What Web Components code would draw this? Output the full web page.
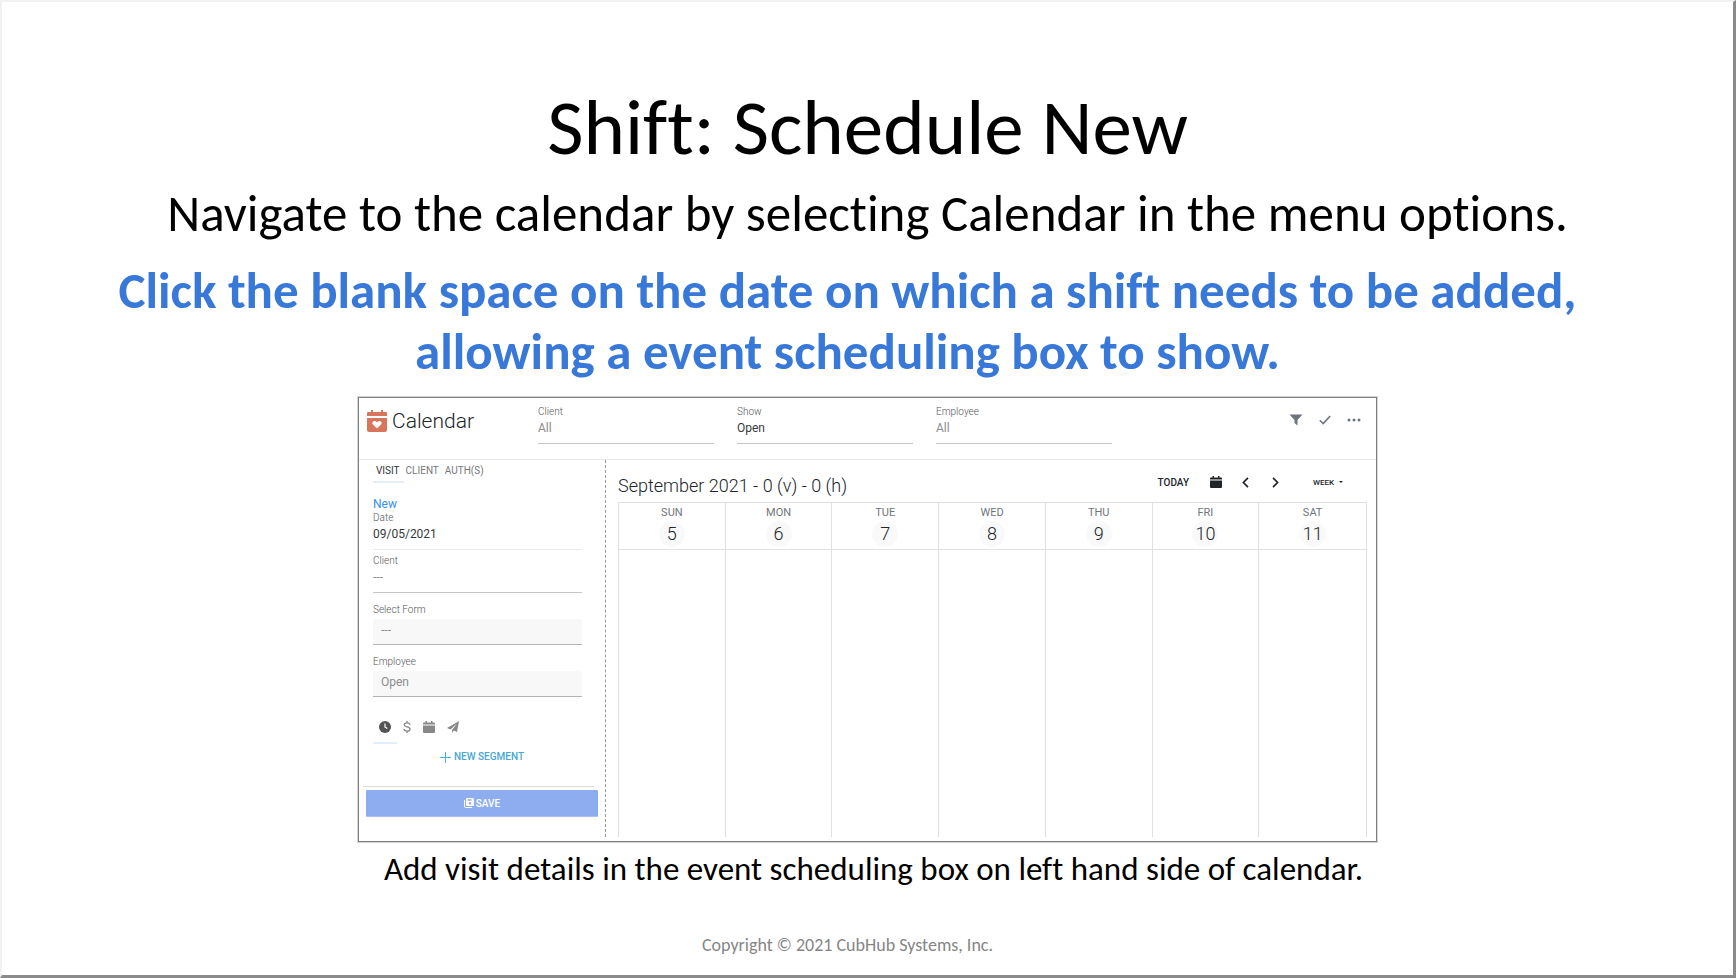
<!DOCTYPE html>
<html lang="en">
<head>
<meta charset="utf-8">
<title>Shift: Schedule New</title>
<style>
    body{
        margin:0;
        background:#fff;
    }
</style>
</head>
<body>
<slide-page>
    <span slot="title">Shift: Schedule New</span>
    <span slot="lead">Navigate to the calendar by selecting Calendar in the menu options.</span>
    <span slot="step">Click the blank space on the date on which a shift needs to be added, allowing a event scheduling box to show.</span>
    <calendar-app></calendar-app>
    <span slot="caption">Add visit details in the event scheduling box on left hand side of calendar.</span>
    <span slot="footer">Copyright © 2021 CubHub Systems, Inc.</span>
</slide-page>

<script>
const icons={
    logo:`<svg width="20" height="22" viewBox="0 0 20 22"><path fill="#d9755a" d="M1 2h3V0h2v2h8V0h2v2h3q1 0 1 1v3H0V3q0-1 1-1zM0 8h20v12q0 2-2 2H2q-2 0-2-2z"/><path fill="#fff" d="M10 18.500l-4-4c-2-2.200 1.300-5.300 4-2.300 2.700-3 6 .1 4 2.300z"/></svg>`,
    filter:`<svg width="14" height="12" viewBox="0 0 14 12"><path fill="#6c757d" d="M.5.5h13L8.500 6v5.500L5.500 9V6z"/></svg>`,
    check:`<svg width="12" height="10" viewBox="0 0 12 10"><path fill="none" stroke="#6c757d" stroke-width="1.600" d="M.8 5.200l3.400 3.300L11.200 1"/></svg>`,
    dots:`<svg width="14" height="4" viewBox="0 0 14 4"><g fill="#6c757d"><circle cx="2" cy="2" r="1.500"/><circle cx="7" cy="2" r="1.500"/><circle cx="12" cy="2" r="1.500"/></g></svg>`,
    clock:`<svg width="12" height="12" viewBox="0 0 12 12"><circle cx="6" cy="6" r="6" fill="#545454"/><path fill="none" stroke="#fff" stroke-width="1.200" d="M6 2.500V6l2.300 1.500"/></svg>`,
    dollar:`<svg width="8" height="12" viewBox="0 0 8 12"><path fill="none" stroke="#888" stroke-width="1.300" d="M7 3.800C6.800 1.400 1.200 1.300 1.200 3.800c0 2.600 5.900 1.600 5.900 4.400 0 2.700-6 2.500-6.200-.2M4 0v2M4 10v2"/></svg>`,
    calendar:`<svg width="12" height="12" viewBox="0 0 12 12"><path fill="currentColor" d="M1 1.500h1.500V0H4v1.500h4V0h1.500v1.500H11q1 0 1 1v1H0v-1q0-1 1-1zM0 4.500h12V11q0 1-1 1H1q-1 0-1-1z"/></svg>`,
    plane:`<svg width="12" height="12" viewBox="0 0 12 12"><path fill="#888" d="M12 0l-2 11-3.200-1.400L5 12V9l5-6.500L3.500 8.400 0 7z"/></svg>`,
    plus:`<svg width="11" height="11" viewBox="0 0 11 11"><path fill="none" stroke="#45b0dc" d="M5.500 0v11M0 5.500h11"/></svg>`,
    save:`<svg width="10" height="10" viewBox="0 0 10 10"><path fill="none" stroke="#fff" d="M.5 2v6.500q0 1 1 1H8"/><path fill="#fff" fill-rule="evenodd" d="M3 0h6l1 1v6q0 1-1 1H3Q2 8 2 7V1q0-1 1-1zM3.500 1.300v1.500h4V1.300zM6 4a1.300 1.300 0 1 0 .01 0z"/></svg>`,
    prev:`<svg width="7" height="11" viewBox="0 0 7 11"><path fill="none" stroke="#212529" stroke-width="1.700" d="M6 .8L1.400 5.500 6 10.200"/></svg>`,
    next:`<svg width="7" height="11" viewBox="0 0 7 11"><path fill="none" stroke="#212529" stroke-width="1.700" d="M1 .8l4.600 4.700L1 10.200"/></svg>`,
    caret:`<svg width="4" height="2" viewBox="0 0 4 2"><path fill="#212529" d="M0 0h4L2 2z"/></svg>`
}

const base=`
    *{
        box-sizing:border-box;
    }
    svg{
        display:block;
        flex:none;
    }
    button{
        display:flex;
        align-items:center;
        margin:0;
        padding:0;
        border:0;
        background:none;
        color:inherit;
        font:inherit;
        cursor:pointer;
    }
    input, select{
        appearance:none;
        margin:0;
        border:0;
        border-radius:0;
        background:none;
        font:inherit;
        outline:0;
    }
`

class SlidePage extends HTMLElement{
    constructor(){
        super()
        this.attachShadow({mode:'open'})
    }
    connectedCallback(){
        this.shadowRoot.innerHTML=`
        <style>
            ${base}
            :host{
                display:flex;
                flex-direction:column;
                align-items:center;
                box-sizing:border-box;
                min-height:100vh;
                padding-top:83px;
                border:2px solid #f1f1f1;
                border-right:3px solid #8a8a8a;
                border-bottom:3px solid #8a8a8a;
                font-family:Carlito, Lato, sans-serif;
                font-variant-ligatures:none;
                color:#000;
                text-align:center;
            }
            h1, p{
                margin:0;
                font-weight:400;
            }
            h1{
                font-size:79px;
                line-height:84px;
            }
            p{
                font-size:51px;
                line-height:61px;
            }
            .lead{
                margin-top:14px;
            }
            .step{
                max-width:1520px;
                margin-top:16px;
                padding-right:40px;
                font-weight:700;
                color:#3878d8;
            }
            ::slotted(calendar-app){
                width:59%;
                max-width:1019px;
                margin-top:15px;
            }
            .caption{
                margin-top:9px;
                padding-left:12px;
                font-size:33px;
                line-height:36px;
            }
            footer{
                margin-top:48px;
                padding-right:40px;
                font-size:18px;
                line-height:20px;
                color:#858585;
            }
        </style>
        <h1><slot name="title"></slot></h1>
        <p class="lead"><slot name="lead"></slot></p>
        <p class="step"><slot name="step"></slot></p>
        <slot></slot>
        <p class="caption"><slot name="caption"></slot></p>
        <footer><slot name="footer"></slot></footer>
        `
    }
}

class CalendarApp extends HTMLElement{
    constructor(){
        super()
        this.attachShadow({mode:'open'})
    }
    connectedCallback(){
        this.shadowRoot.innerHTML=`
        <style>
            ${base}
            :host{
                display:block;
                box-sizing:border-box;
                border:1px solid #7f7f7f;
                outline:1px solid #d4d4d4;
                font-family:Roboto, sans-serif;
                text-align:left;
                color:#212529;
            }
            .main{
                display:flex;
                padding-bottom:4px;
            }
            visit-panel{
                width:247px;
                flex:none;
            }
            week-view{
                flex:1;
            }
        </style>
        <app-header></app-header>
        <div class="main">
            <visit-panel></visit-panel>
            <week-view></week-view>
        </div>
        `
    }
}

class AppHeader extends HTMLElement{
    constructor(){
        super()
        this.attachShadow({mode:'open'})
    }
    connectedCallback(){
        this.shadowRoot.innerHTML=`
        <style>
            ${base}
            :host{
                display:flex;
                align-items:flex-start;
                height:62px;
                padding:0 15px 0 8px;
                border-bottom:1px solid #e6e8e9;
            }
            h2{
                display:flex;
                gap:5px;
                align-items:center;
                width:171px;
                margin:0;
                padding-top:11px;
                font-size:21px;
                line-height:24px;
                font-weight:300;
            }
            .filters{
                display:flex;
                flex:1;
                gap:23px;
                padding-top:8px;
            }
            form-field{
                width:176px;
            }
            .actions{
                display:flex;
                align-items:center;
                gap:16px;
                height:44px;
            }
        </style>
        <h2>${icons.logo}Calendar</h2>
        <div class="filters">
            <form-field kind="select" label="Client" value="All"></form-field>
            <form-field kind="select" label="Show" value="Open" class="dark"></form-field>
            <form-field kind="select" label="Employee" value="All"></form-field>
        </div>
        <div class="actions">
            <button aria-label="Filter">${icons.filter}</button>
            <button aria-label="Confirm">${icons.check}</button>
            <button aria-label="More">${icons.dots}</button>
        </div>
        `
    }
}

// label over a text box or a drop-down, class "filled" gives the grey box
class FormField extends HTMLElement{
    constructor(){
        super()
        this.attachShadow({mode:'open'})
    }
    connectedCallback(){
        const label=this.getAttribute('label')
        const value=this.getAttribute('value')
        const control=this.getAttribute('kind')==='select'
            ? `<select id="control"><option>${value}</option></select>`
            : `<input id="control" type="text" value="${value}">`
        this.shadowRoot.innerHTML=`
        <style>
            ${base}
            :host{
                display:block;
                color:#8c8c8c;
            }
            label{
                display:block;
                font-size:10px;
                line-height:12px;
                font-weight:300;
                color:#555;
            }
            input, select{
                display:block;
                width:100%;
                height:26px;
                padding:0 0 6px;
                border-bottom:1px solid #c4c6c8;
                font-size:12px;
                line-height:18px;
                color:inherit;
            }
            :host(.dark){
                color:#343a40;
            }
            :host(.light) input{
                border-color:#e9eaeb;
            }
            :host(.filled) label{
                margin-bottom:3px;
            }
            :host(.filled) select{
                padding:0 8px 4px;
                border-color:#b4b4b4;
                border-radius:2px 2px 0 0;
                background:#f8f8f8;
            }
        </style>
        <label for="control">${label}</label>
        ${control}
        `
    }
}

class VisitPanel extends HTMLElement{
    constructor(){
        super()
        this.attachShadow({mode:'open'})
    }
    connectedCallback(){
        this.shadowRoot.innerHTML=`
        <style>
            ${base}
            :host{
                display:flex;
                flex-direction:column;
                border-right:1px dashed #999;
            }
            .form{
                display:flex;
                flex-direction:column;
                padding:3px 23px 0 14px;
            }
            nav{
                display:flex;
                gap:6px;
                font-size:10px;
                color:#777;
            }
            nav button{
                height:20px;
                padding-bottom:4px;
                border-bottom:2px solid transparent;
            }
            nav .active{
                padding-left:3px;
                padding-right:4px;
                border-color:#e3eefa;
                color:#333;
            }
            nav .active + button{
                margin-left:-4px;
            }
            h3{
                margin:14px 0 0;
                font-size:12px;
                line-height:15px;
                font-weight:400;
                color:#3490ea;
            }
            .client{
                margin-top:5px;
            }
            .form-type{
                margin-top:11px;
            }
            .employee{
                margin-top:11px;
            }
            .tools{
                gap:12px;
                margin-top:22px;
                color:#888;
            }
            .tools button{
                height:25px;
                padding-bottom:8px;
            }
            .tools .active{
                padding-left:6px;
                padding-right:6px;
            }
            .tools .active + button{
                margin-left:-6px;
            }
            .segment{
                align-self:center;
                gap:3px;
                margin-top:7px;
                padding-left:9px;
                font-size:10px;
                line-height:12px;
                font-weight:500;
                color:#45a8d4;
            }
            hr{
                margin:23px 11px 3px 4px;
                border:0;
                border-top:1px solid #ddd;
            }
            .save{
                justify-content:center;
                gap:2px;
                height:27px;
                margin:0 7px 20px 7px;
                border-bottom:1px solid #a8bff0;
                border-radius:1px;
                background:#8dadf0;
                font-size:10px;
                font-weight:500;
                color:#fff;
            }
        </style>
        <div class="form">
            <nav>
                <button class="active">VISIT</button>
                <button>CLIENT</button>
                <button>AUTH(S)</button>
            </nav>
            <h3>New</h3>
            <form-field kind="text" label="Date" value="09/05/2021" class="dark light"></form-field>
            <form-field kind="text" label="Client" value="---" class="client"></form-field>
            <form-field kind="select" label="Select Form" value="---" class="filled form-type"></form-field>
            <form-field kind="select" label="Employee" value="Open" class="filled employee"></form-field>
            <nav class="tools">
                <button class="active" aria-label="Time">${icons.clock}</button>
                <button aria-label="Billing">${icons.dollar}</button>
                <button aria-label="Dates">${icons.calendar}</button>
                <button aria-label="Send">${icons.plane}</button>
            </nav>
            <button class="segment">${icons.plus}NEW SEGMENT</button>
        </div>
        <hr>
        <button class="save">${icons.save}SAVE</button>
        `
    }
}

class WeekView extends HTMLElement{
    constructor(){
        super()
        this.attachShadow({mode:'open'})
    }
    connectedCallback(){
        const days=['SUN','MON','TUE','WED','THU','FRI','SAT']
        const heads=days.map((day,i)=>`<th scope="col">${day}<span>${i+5}</span></th>`).join('')
        this.shadowRoot.innerHTML=`
        <style>
            ${base}
            :host{
                display:flex;
                flex-direction:column;
                padding:0 9px 0 12px;
            }
            .bar{
                display:flex;
                align-items:center;
                height:42px;
            }
            h3{
                flex:1;
                margin:0;
                padding-top:9px;
                font-size:18px;
                line-height:24px;
                font-weight:300;
            }
            .controls{
                display:flex;
                align-items:center;
                padding:2px 24px 0 0;
                font-size:10px;
                font-weight:500;
            }
            .today{
                margin-right:21px;
            }
            .prev{
                margin:0 23px 0 20px;
            }
            .next{
                margin-right:34px;
            }
            label{
                display:flex;
                align-items:center;
                gap:4px;
                font-size:8px;
            }
            select{
                padding:0;
                color:inherit;
            }
            table{
                flex:1;
                display:flex;
                flex-direction:column;
                border:1px solid #dee2e6;
                border-bottom:0;
            }
            thead, tbody{
                display:flex;
            }
            tbody{
                flex:1;
            }
            tr{
                display:grid;
                grid-template-columns:repeat(7, 1fr);
                flex:1;
            }
            th, td{
                padding:0;
                border-right:1px solid #dee2e6;
            }
            th:last-child, td:last-child{
                border-right:0;
            }
            th{
                display:flex;
                flex-direction:column;
                align-items:center;
                gap:2px;
                height:47px;
                padding-top:3px;
                border-bottom:1px solid #dee2e6;
                font-size:11px;
                line-height:13px;
                font-weight:400;
                color:#70757a;
            }
            th span{
                width:26px;
                height:26px;
                border-radius:50%;
                background:#f9f9f9;
                font-size:18px;
                line-height:26px;
                font-weight:300;
                text-align:center;
                color:#212529;
            }
        </style>
        <div class="bar">
            <h3>September 2021 - 0 (v) - 0 (h)</h3>
            <div class="controls">
                <button class="today">TODAY</button>
                <button aria-label="Pick date">${icons.calendar}</button>
                <button class="prev" aria-label="Previous">${icons.prev}</button>
                <button class="next" aria-label="Next">${icons.next}</button>
                <label><select aria-label="View"><option>WEEK</option></select>${icons.caret}</label>
            </div>
        </div>
        <table>
            <thead><tr>${heads}</tr></thead>
            <tbody><tr>${'<td></td>'.repeat(7)}</tr></tbody>
        </table>
        `
    }
}

window.customElements.define('form-field',FormField)
window.customElements.define('app-header',AppHeader)
window.customElements.define('visit-panel',VisitPanel)
window.customElements.define('week-view',WeekView)
window.customElements.define('calendar-app',CalendarApp)
window.customElements.define('slide-page',SlidePage)
</script>
</body>
</html>
